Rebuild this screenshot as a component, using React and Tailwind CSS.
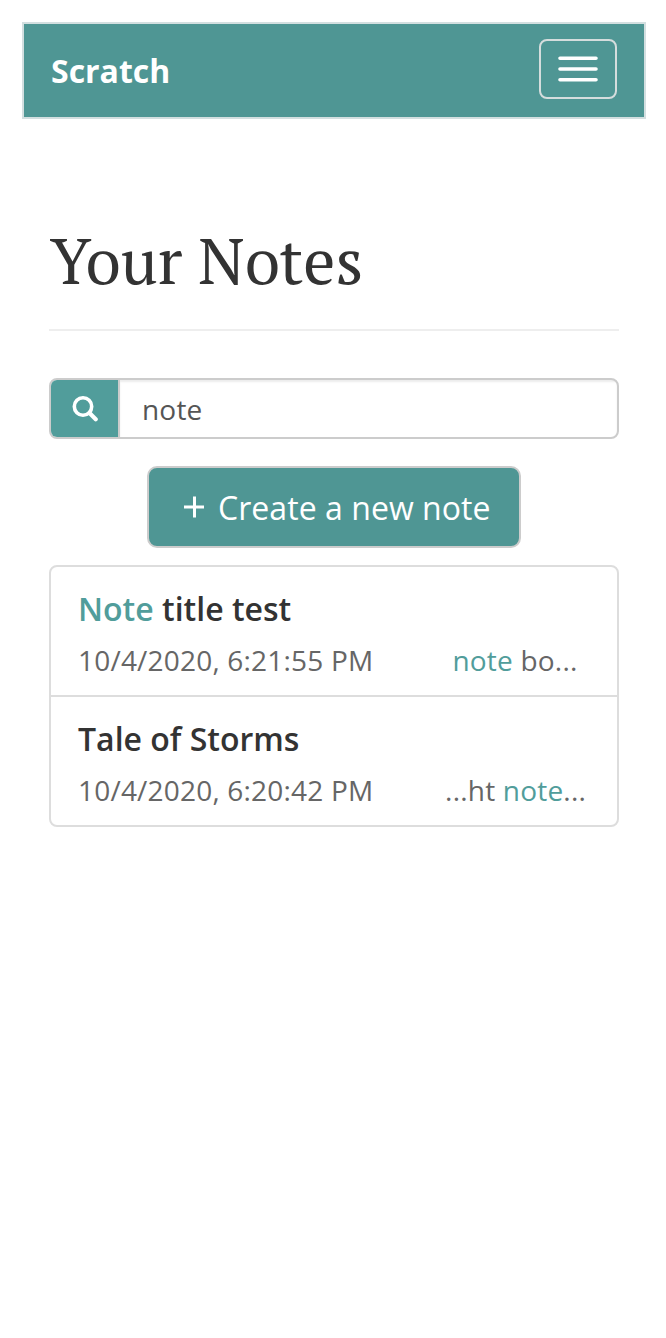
const Hit = ({ children }) => <span className="text-[#519d9b]">{children}</span>;

function NoteRow({ title, date, excerpt, excerptClass }) {
  return (
    <li className="h-[130px] border-b-2 border-[#ddd] pt-[20px] pl-[27px] last:border-b-0">
      <h2 className="text-[32px] leading-[44px] font-semibold">{title}</h2>
      <div className="mt-[9px] flex justify-between text-[28px] leading-[40px] tracking-[0.2px] whitespace-nowrap text-[#666]">
        <span>{date}</span>
        <span className={excerptClass}>{excerpt}</span>
      </div>
    </li>
  );
}

export default function App() {
  return (
    <div className="min-h-[1338px] w-[666px] bg-white px-[22px] pt-[22px] font-['Open_Sans',sans-serif] text-[#333]">
      <nav className="flex h-[97px] w-[624px] items-center justify-between border-2 border-[#d3dfe0] bg-[#4f9694] px-[27px]">
        <span className="text-[32px] leading-none font-bold text-white">Scratch</span>
        <button aria-label="Menu" className="mt-[-3px] flex h-[60px] w-[78px] items-center justify-center rounded-[8px] border-2 border-[#d5dddd]">
          <svg width="40" height="26" viewBox="0 0 40 26" stroke="white" strokeWidth="3.6" strokeLinecap="round"><path d="M2 2.200H38M2 13H38M2 23.700H38" /></svg>
        </button>
      </nav>
      <main className="ml-[27px] w-[570px]">
        <h1 className="h-[212px] border-b-2 border-[#eee] pt-[101px] pl-px font-['PT_Serif','Noto_Serif','Liberation_Serif',serif] text-[64px] leading-[80px] tracking-[0.05px]">Your Notes</h1>
        <div className="mt-[47px] flex h-[61px] overflow-hidden rounded-[8px] border-2 border-[#ccc]">
          <span className="flex w-[69px] items-center justify-center border-r-2 border-[#ccc] bg-[#519d9b]">
            <svg className="ml-px" width="26" height="26" viewBox="0 0 26 26" fill="none" stroke="white"><circle cx="11" cy="10.500" r="8.700" strokeWidth="3.600" /><path d="M17.500 17 23.700 23.200" strokeWidth="4.200" strokeLinecap="round" /></svg>
          </span>
          <span className="flex-1 pl-[22px] text-[28px] leading-[58px] tracking-[0.2px] text-[#555] shadow-[inset_0_2px_2px_rgba(0,0,0,0.075)]">note</span>
        </div>
        <button className="mx-auto mt-[27px] flex h-[82px] w-[374px] items-center rounded-[10px] border-2 border-[#ccc] bg-[#4f9694] pl-[34px] text-[32px] text-white">
          <svg className="mr-[13px]" width="22" height="22" viewBox="0 0 22 22" stroke="white" strokeWidth="3"><path d="M11.500 .5V21.500M1 11H21" /></svg>
          <span className="pt-px tracking-[0.05px]">Create a new note</span>
        </button>
        <ul className="mt-[17px] h-[262px] rounded-[8px] border-2 border-[#ddd]">
          <NoteRow title={<><Hit>Note</Hit> title test</>} date="10/4/2020, 6:21:55 PM" excerpt={<><Hit>note</Hit> bo...</>} excerptClass="mr-[39.5px]" />
          <NoteRow title="Tale of Storms" date="10/4/2020, 6:20:42 PM" excerpt={<>...ht <Hit>note</Hit>...</>} excerptClass="mr-[31px]" />
        </ul>
      </main>
    </div>
  );
}
